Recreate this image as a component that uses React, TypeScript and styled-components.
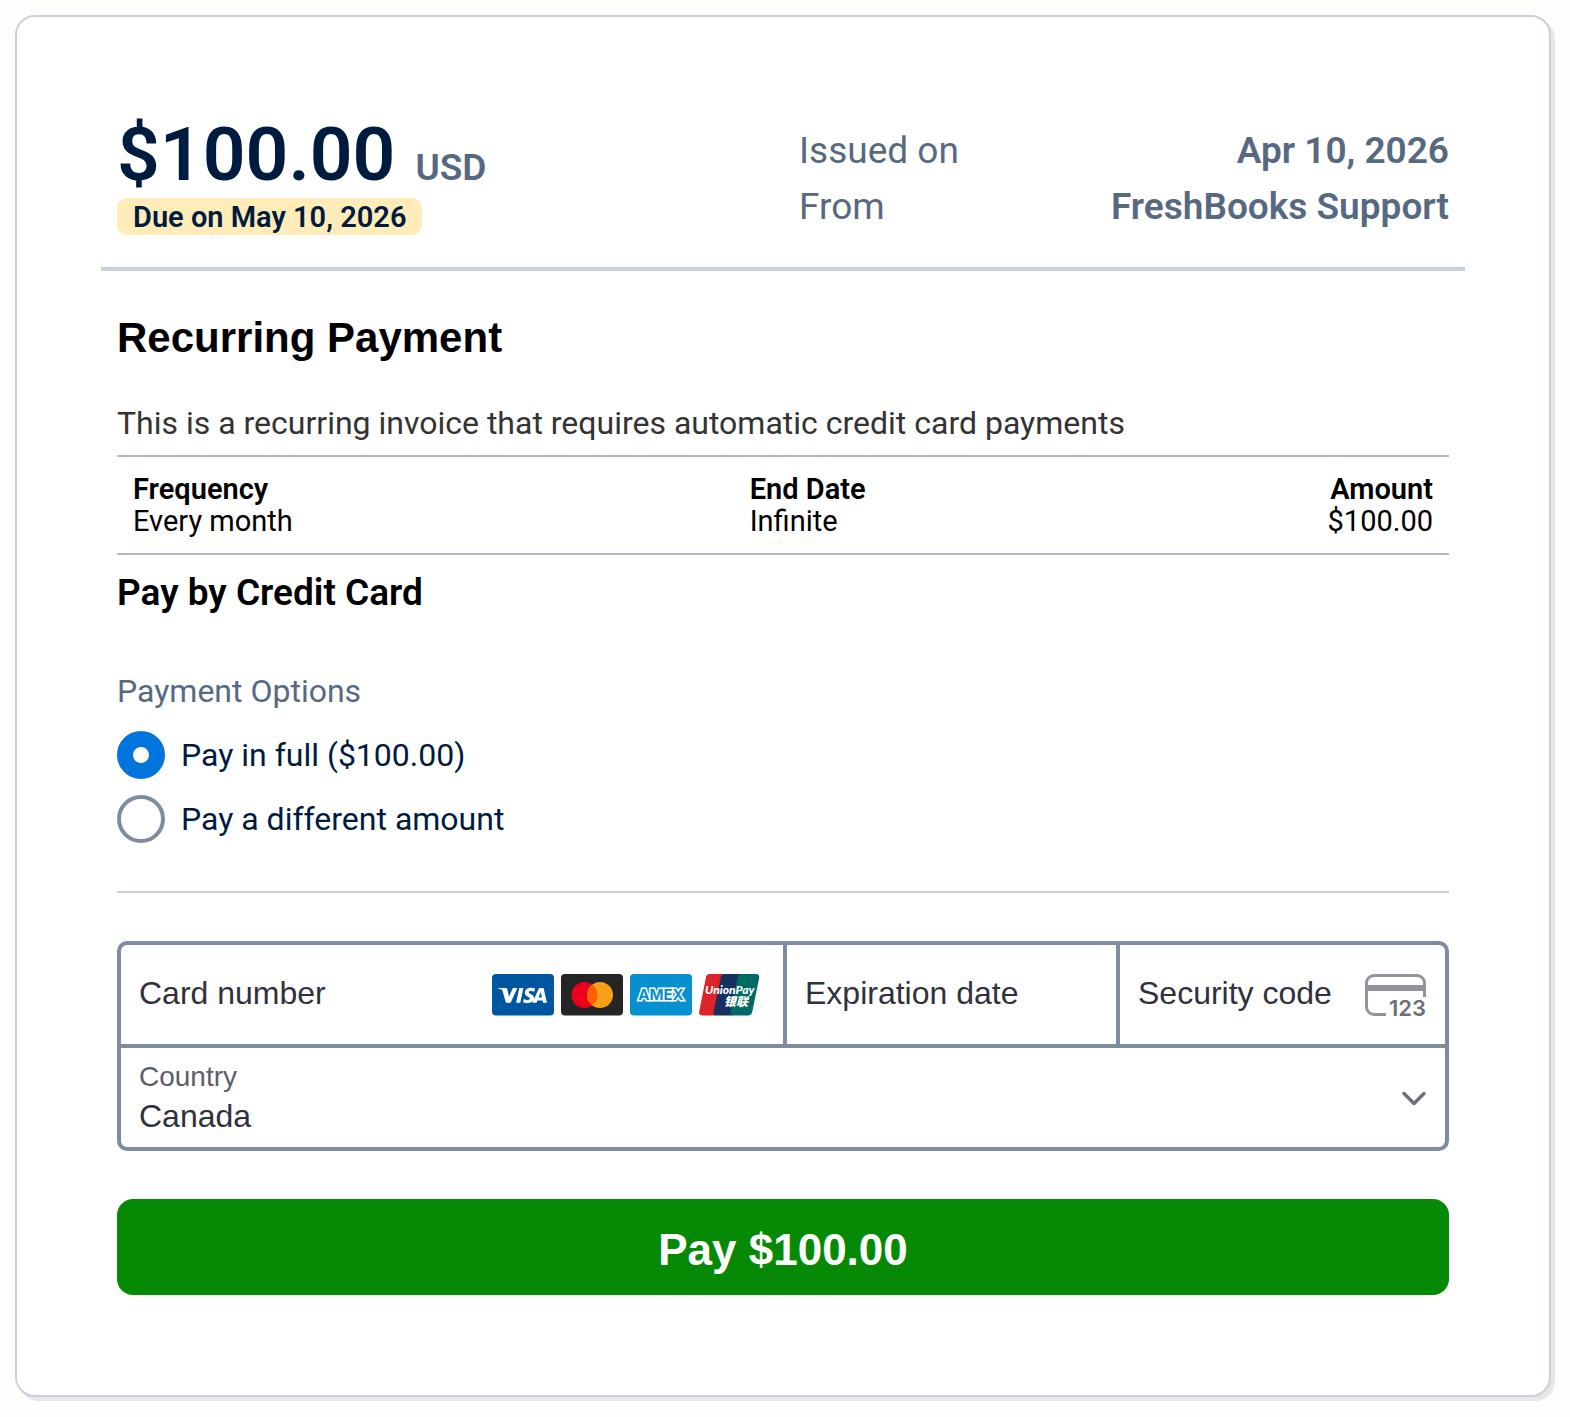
import React, { useState } from 'react';
import styled, { createGlobalStyle } from 'styled-components';

const body = 'Roboto, "Noto Sans", sans-serif';
const grotesk = '"Liberation Sans", Arial, sans-serif';

const color = {
  page: '#fffefc',
  navy: '#001b40',
  slate: '#576981',
  line: '#cbd1da',
  field: '#7f8b9f',
  ink: '#30313d',
  blue: '#0075dd',
  green: '#068a06',
};

const GlobalStyle = createGlobalStyle`
  *, *::before, *::after { box-sizing: border-box; }
  body {
    margin: 0;
    background: ${color.page};
    color: #000;
    font-family: ${body};
    -webkit-font-smoothing: antialiased;
  }
  h1, h2, p, dl, dd, fieldset { margin: 0; padding: 0; border: 0; }
`;

const Page = styled.div`
  padding: 15px 19px 20px 15px;
`;

const Card = styled.main`
  padding: 100px 84px;
  background: #fff;
  border: 2px solid ${color.line};
  border-radius: 20px;
  box-shadow: 4px 4px 0 #e5e7ea;
`;

const Header = styled.header`
  display: grid;
  grid-template-columns: 1fr 1fr;
  column-gap: 32px;
  padding: 4px 16px 32px;
  border-bottom: 4px solid ${color.line};
`;

const Total = styled.div`
  display: flex;
  align-items: baseline;
  gap: 20px;
  height: 77px;
  line-height: 66px;
`;

const Amount = styled.strong`
  color: ${color.navy};
  font-size: 75px;
  font-weight: 600;
`;

const Currency = styled.span`
  color: ${color.slate};
  font-size: 37px;
  font-weight: 600;
`;

const DueBadge = styled.div`
  width: fit-content;
  padding: 2px 16px 0;
  border-radius: 10px;
  background: #ffecb8;
  color: ${color.navy};
  font-size: 29px;
  font-weight: 600;
  line-height: 35px;
`;

const Meta = styled.dl`
  padding-top: 2px;
  font-size: 37px;
  line-height: 56px;
  color: ${color.slate};
`;

const MetaRow = styled.div`
  display: flex;
  justify-content: space-between;

  dd { font-weight: 600; }
`;

const Content = styled.form`
  display: flex;
  flex-direction: column;
  padding: 42px 16px 0;
`;

const Title = styled.h1`
  font: bold 42px/50px ${grotesk};
`;

const Intro = styled.p`
  margin-top: 36px;
  color: #333;
  font-size: 32px;
  line-height: 48px;
`;

const Schedule = styled.table`
  width: 100%;
  margin-top: 8px;
  border-collapse: separate;
  border-spacing: 0;
  border-top: 2px solid #aebac8;
  border-bottom: 2px solid #aebac8;
  font-size: 29px;
  line-height: 32px;
`;

const Cell = styled.td<{ $end?: boolean }>`
  padding: 0 16px;
  text-align: ${(p) => (p.$end ? 'right' : 'left')};

  thead & { padding-top: 16px; font-weight: 600; }
  tbody & { padding-bottom: 16px; }
`;

const Subtitle = styled.h2`
  margin-top: 10px;
  font-size: 37px;
  font-weight: 600;
  line-height: 56px;
`;

const Options = styled.fieldset`
  display: flex;
  flex-direction: column;
  gap: 16px;
  margin-top: 46px;
  padding-bottom: 48px;
  border-bottom: 2px solid ${color.line};
`;

const Legend = styled.legend`
  padding: 0 0 16px;
  color: ${color.slate};
  font-size: 32px;
  line-height: 48px;
`;

const Option = styled.label`
  display: flex;
  align-items: center;
  gap: 16px;
  color: ${color.navy};
  font-size: 32px;
  line-height: 48px;
`;

const Radio = styled.input`
  appearance: none;
  width: 48px;
  height: 48px;
  margin: 0;
  border: 4px solid ${color.field};
  border-radius: 50%;
  background: #fff;

  &:checked { border: 16px solid ${color.blue}; }
`;

const CardFields = styled.div`
  display: grid;
  grid-template-columns: 2fr 1fr 1fr;
  margin-top: 48px;
`;

const Field = styled.label<{ $place?: 'first' | 'last' }>`
  display: flex;
  align-items: center;
  gap: 8px;
  min-width: 0;
  height: 103px;
  padding: 0 18px;
  border: 4px solid ${color.field};
  border-bottom: 0;
  border-right-width: ${(p) => (p.$place === 'last' ? '4px' : '0')};
  border-top-left-radius: ${(p) => (p.$place === 'first' ? '10px' : '0')};
  border-top-right-radius: ${(p) => (p.$place === 'last' ? '10px' : '0')};
  background: #fff;
`;

const TextInput = styled.input`
  flex: 1;
  width: 0;
  min-width: 0;
  height: 50px;
  padding: 0 0 2px;
  border: 0;
  outline: 0;
  background: transparent;
  color: ${color.ink};
  font: 32px/48px ${grotesk};

  &::placeholder { color: ${color.ink}; opacity: 1; }
`;

const Brands = styled.span`
  display: flex;
  gap: 7px;
  padding-right: 4px;
`;

const Glyph = styled.svg`
  display: block;
  flex: none;
  overflow: visible;
`;

const CountryField = styled.div`
  position: relative;
  display: flex;
  flex-direction: column;
  grid-column: 1 / -1;
  padding: 10px 18px 11px;
  border: 4px solid ${color.field};
  border-radius: 0 0 10px 10px;
  background: #fff;
  font-family: ${grotesk};
`;

const CountryLabel = styled.label`
  color: #5c5d69;
  font-size: 28px;
  line-height: 38px;
`;

const CountrySelect = styled.select`
  appearance: none;
  width: 100%;
  height: 40px;
  padding: 0;
  border: 0;
  outline: 0;
  background: transparent;
  color: ${color.ink};
  font: 32px/40px ${grotesk};
`;

const Chevron = styled(Glyph)`
  position: absolute;
  top: 43px;
  right: 18px;
  pointer-events: none;
`;

const PayButton = styled.button`
  height: 96px;
  margin-top: 48px;
  padding: 6px 0 0;
  border: 0;
  border-radius: 16px;
  background: ${color.green};
  color: #fff;
  font: bold 44px/56px ${grotesk};
  cursor: pointer;
`;

const Visa = () => (
  <Glyph width="62" height="42" viewBox="0 0 62 42" role="img" aria-label="Visa">
    <rect width="62" height="41.5" rx="4" fill="#00579f" />
    <path
      fill="#fff"
      d="M6.3 14h7c1.3 0 1.9.5 2.1 1.500l1.500 7.300 4-8.800h4.500l-6.800 14.700h-4.700l-3.400-11.900c-.2-.7-.5-1-1.100-1.300-.9-.5-2-.8-3.200-1.100zM27.300 14h4.100l-3.100 14.700h-4.200zM43 14.500l-.7 3.200c-.9-.4-2-.7-3.200-.7-1.600 0-2.400.5-2.400 1.200 0 2 5.400 1.900 5.400 5.800 0 3.200-2.900 5-6.700 5-1.800 0-3.500-.4-4.400-.8l.7-3.300c1.200.6 2.500 1 4 1 1.300 0 2.200-.5 2.200-1.300 0-1.900-5.100-2-5.100-5.800 0-2.900 2.700-5 6.500-5 1.500 0 2.800.3 3.700.7zM48.200 14h3.400l3.300 14.700h-3.800l-.5-2.200h-5.200l-.9 2.200h-4.100l6.100-13.500c.3-.8.9-1.200 1.700-1.200zm.6 4-2.200 5.500h3.300z"
    />
  </Glyph>
);

const Mastercard = () => (
  <Glyph width="62" height="42" viewBox="0 0 62 42" role="img" aria-label="Mastercard">
    <rect width="62" height="41.5" rx="4" fill="#252525" />
    <circle cx="23.500" cy="21" r="13" fill="#eb001b" />
    <circle cx="39" cy="21" r="13" fill="#f79e1b" />
    <path d="M31.250 10.560a13 13 0 0 1 0 20.880 13 13 0 0 1 0-20.880z" fill="#ff5f00" />
  </Glyph>
);

const Amex = () => (
  <Glyph width="62" height="42" viewBox="0 0 62 42" role="img" aria-label="American Express">
    <rect width="62" height="41.5" rx="4" fill="#0690d0" />
    <text
      x="31"
      y="26"
      textAnchor="middle"
      fill="#0690d0"
      stroke="#fff"
      strokeWidth="3"
      paintOrder="stroke"
      fontFamily="Inter, sans-serif"
      fontSize="15"
      fontWeight="700"
    >
      AMEX
    </text>
  </Glyph>
);

const UnionPay = () => (
  <Glyph width="62" height="42" viewBox="0 0 62 42" role="img" aria-label="UnionPay">
    <path d="M10.500 0H24l-7 41.500H3.500C1 41.500-.4 40 .2 37.500L7 3C7.400 1.200 8.700 0 10.500 0z" fill="#dd2427" />
    <path d="M25.500 0H42l-8 41.500H17.500c-2.300 0-3.400-1.500-2.900-4L21.800 3c.4-1.800 1.800-3 3.700-3z" fill="#16315f" />
    <path d="M42.500 0H57c2.500 0 3.800 1.500 3.200 4l-7 34c-.5 2.200-1.900 3.500-4.200 3.500H34.500c-2.300 0-3.400-1.500-2.900-4L38.800 3c.4-1.800 1.800-3 3.700-3z" fill="#006a65" />
    <text x="6" y="20" fill="#fff" fontFamily="Lato, sans-serif" fontSize="12" fontWeight="900" fontStyle="italic">
      UnionPay
    </text>
    <text x="25" y="32" fill="#fff" fontFamily="'Noto Sans CJK SC', sans-serif" fontSize="12" fontWeight="900" fontStyle="italic">
      银联
    </text>
  </Glyph>
);

const SecurityCode = () => (
  <Glyph width="62" height="42" viewBox="0 0 62 42" aria-hidden="true">
    <path d="M1.500 13V9A7.500 7.500 0 0 1 9 1.500h43A7.500 7.500 0 0 1 59.500 9v14M1.500 13v20A7.500 7.500 0 0 0 9 40.500h12" fill="none" stroke="#93939b" strokeWidth="3" />
    <path d="M1.500 14h58" stroke="#93939b" strokeWidth="6" />
    <text x="61" y="42" textAnchor="end" fill="#6d6e78" fontFamily="Inter, sans-serif" fontSize="22" fontWeight="600">
      123
    </text>
  </Glyph>
);

export default function App() {
  const [option, setOption] = useState('full');

  return (
    <>
      <GlobalStyle />
      <Page>
        <Card>
          <Header>
            <div>
              <Total>
                <Amount>$100.00</Amount>
                <Currency>USD</Currency>
              </Total>
              <DueBadge>Due on May 10, 2026</DueBadge>
            </div>
            <Meta>
              <MetaRow>
                <dt>Issued on</dt>
                <dd>Apr 10, 2026</dd>
              </MetaRow>
              <MetaRow>
                <dt>From</dt>
                <dd>FreshBooks Support</dd>
              </MetaRow>
            </Meta>
          </Header>

          <Content onSubmit={(e) => e.preventDefault()}>
            <Title>Recurring Payment</Title>
            <Intro>This is a recurring invoice that requires automatic credit card payments</Intro>
            <Schedule>
              <colgroup>
                <col width="46.3%" />
                <col />
                <col />
              </colgroup>
              <thead>
                <tr>
                  <Cell as="th" scope="col">Frequency</Cell>
                  <Cell as="th" scope="col">End Date</Cell>
                  <Cell as="th" scope="col" $end>Amount</Cell>
                </tr>
              </thead>
              <tbody>
                <tr>
                  <Cell>Every month</Cell>
                  <Cell>Infinite</Cell>
                  <Cell $end>$100.00</Cell>
                </tr>
              </tbody>
            </Schedule>

            <Subtitle>Pay by Credit Card</Subtitle>
            <Options>
              <Legend>Payment Options</Legend>
              <Option>
                <Radio type="radio" name="option" checked={option === 'full'} onChange={() => setOption('full')} />
                Pay in full ($100.00)
              </Option>
              <Option>
                <Radio type="radio" name="option" checked={option === 'other'} onChange={() => setOption('other')} />
                Pay a different amount
              </Option>
            </Options>

            <CardFields>
              <Field $place="first">
                <TextInput placeholder="Card number" aria-label="Card number" inputMode="numeric" />
                <Brands>
                  <Visa />
                  <Mastercard />
                  <Amex />
                  <UnionPay />
                </Brands>
              </Field>
              <Field>
                <TextInput placeholder="Expiration date" aria-label="Expiration date" inputMode="numeric" />
              </Field>
              <Field $place="last">
                <TextInput placeholder="Security code" aria-label="Security code" inputMode="numeric" />
                <SecurityCode />
              </Field>
              <CountryField>
                <CountryLabel htmlFor="country">Country</CountryLabel>
                <CountrySelect id="country" defaultValue="Canada">
                  <option>Canada</option>
                  <option>United States</option>
                </CountrySelect>
                <Chevron width="26" height="16" viewBox="0 0 26 16" aria-hidden="true">
                  <path d="m3 2.500 10 10 10-10" fill="none" stroke="#6d6e78" strokeWidth="3.500" strokeLinecap="round" strokeLinejoin="round" />
                </Chevron>
              </CountryField>
            </CardFields>

            <PayButton type="submit">Pay $100.00</PayButton>
          </Content>
        </Card>
      </Page>
    </>
  );
}
